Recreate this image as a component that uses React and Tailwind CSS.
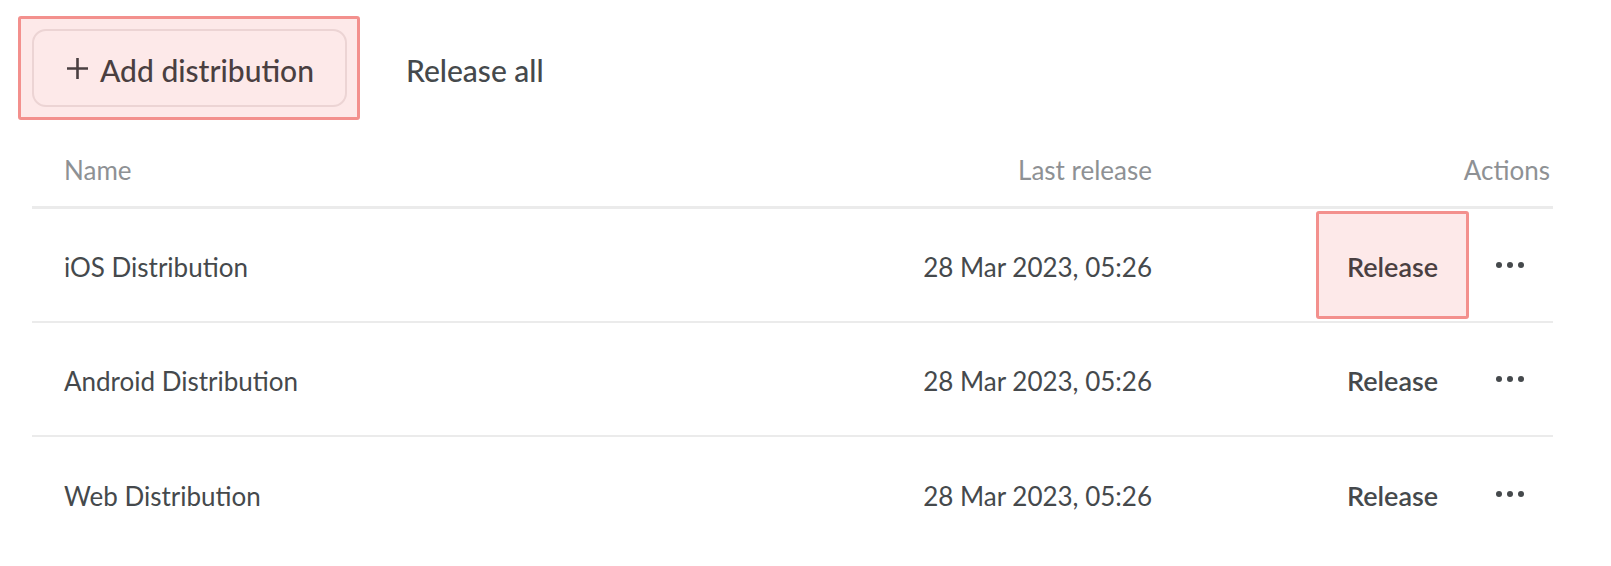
import React from 'react';

const rows = [
  { name: 'iOS Distribution', date: '28 Mar 2023, 05:26', highlight: true },
  { name: 'Android Distribution', date: '28 Mar 2023, 05:26' },
  { name: 'Web Distribution', date: '28 Mar 2023, 05:26' },
];

function Dots() {
  return (
    <div className="flex items-center gap-[5px] w-[28px]">
      <span className="w-[6px] h-[6px] rounded-full bg-[#45494c]" />
      <span className="w-[6px] h-[6px] rounded-full bg-[#45494c]" />
      <span className="w-[6px] h-[6px] rounded-full bg-[#45494c]" />
    </div>
  );
}

function Plus() {
  return (
    <svg width="23" height="23" viewBox="0 0 23 23" className="mr-[11px] mb-[4px]">
      <path d="M11.5 1v21M1 11.5h21" stroke="#4a3f41" strokeWidth="2.6" />
    </svg>
  );
}

export default function App() {
  return (
    <div className="min-h-screen w-full bg-white font-['Lato',sans-serif] text-[#45494c] text-[26px] pl-[32px] pr-[58px] pt-[16px]">
      {/* Toolbar */}
      <div className="flex items-center h-[104px]">
        <div className="ml-[-14px] h-[104px] w-[342px] rounded-[3px] border-[3px] border-[#f3908d] bg-[#fde9e9] flex items-center pl-[11px]">
          <button className="h-[78px] w-[315px] rounded-[14px] border-2 border-[#ecd4d4] bg-[#fde9e9] flex items-center pl-[32px] pt-[4px] text-[30px] text-[#4a3f41] font-medium">
            <Plus />
            Add distribution
          </button>
        </div>
        <button className="ml-[46px] pt-[4px] text-[30px] font-medium text-[#45494c]">Release all</button>
      </div>

      {/* Table */}
      <div className="mt-[10px]">
        <div className="flex items-center h-[79px] border-b-[3px] border-[#ebebeb] text-[#8e9194]">
          <div className="flex-1 pl-[32px] pt-[4px]">Name</div>
          <div className="w-[300px] text-right pt-[4px]">Last release</div>
          <div className="w-[401px] text-right pr-[3px] pt-[4px]">Actions</div>
        </div>
        {rows.map((r, i) => (
          <div
            key={r.name}
            className={
              'flex items-center h-[114px] ' +
              (i < rows.length - 1 ? 'border-b-2 border-[#ebebeb]' : '')
            }
          >
            <div className="flex-1 pl-[32px] pt-[4px]">{r.name}</div>
            <div className="w-[300px] text-right pt-[4px]">{r.date}</div>
            <div className="w-[401px] flex items-center justify-end pr-[29px] gap-[27px]">
              <button
                className={
                  'w-[153px] h-[108px] rounded-[3px] border-[3px] pt-[4px] text-[27px] font-semibold flex items-center justify-center ' +
                  (r.highlight
                    ? 'border-[#f3908d] bg-[#fde9e9] text-[#4a3f41]'
                    : 'border-transparent text-[#45494c]')
                }
              >
                Release
              </button>
              <Dots />
            </div>
          </div>
        ))}
      </div>
    </div>
  );
}
